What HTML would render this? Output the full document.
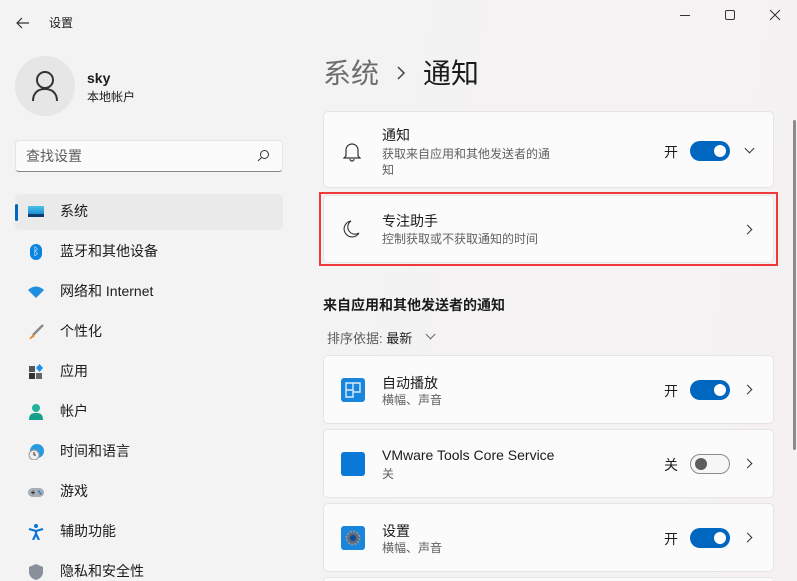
<!DOCTYPE html>
<html style="width:797px;height:581px;overflow:hidden"><head><meta charset="utf-8"><style>
*{margin:0;padding:0;box-sizing:border-box}
body{width:797px;height:581px;overflow:hidden;position:relative;font-family:"Liberation Sans","Noto Sans CJK SC",sans-serif;background:linear-gradient(100deg,#f3f3f3 0%,#f3f3f3 40%,#f5f1f2 100%);color:#1b1b1b;font-size:14px}
.a{position:absolute}
.nav{position:absolute;left:15px;width:268px;height:36px;display:flex;align-items:center}
.nav .ic{width:16px;height:16px;margin-left:13px;margin-right:16px;position:relative}
.nav span{font-size:14px;position:relative;top:-1px}
.card{position:absolute;left:323px;width:451px;background:#fbfbfb;border:1px solid #e6e5e5;border-radius:5px}
.t{position:absolute;left:58px;font-size:14px}
.s{position:absolute;left:58px;font-size:12px;color:#616161;line-height:16px}
.tog{position:absolute;width:40px;height:20px;border-radius:10px;background:#0067c0}
.tog::after{content:"";position:absolute;right:4px;top:4px;width:12px;height:12px;border-radius:50%;background:#fff}
.off{background:#f6f6f6;border:1px solid #8a8a8a}
.off::after{left:4px;right:auto;top:3px;background:#5d5d5d}
.chev{position:absolute;width:7px;height:7px;border-right:1.3px solid #333;border-top:1.3px solid #333;transform:rotate(45deg)}
.lab{position:absolute;font-size:14px}
</style></head><body>
<svg class="a" style="left:15px;top:15px" width="16" height="16"><path d="M14 8H2M7 3L2 8l5 5" stroke="#333" stroke-width="1.2" fill="none"/></svg>
<div class="a" style="left:49px;top:14px;font-size:12px">设置</div>
<div class="a" style="left:680px;top:15px;width:10px;border-top:1px solid #333"></div>
<div class="a" style="left:725px;top:10px;width:10px;height:10px;border:1px solid #333;border-radius:2px"></div>
<svg class="a" style="left:769px;top:9px" width="12" height="12"><path d="M1 1l10 10M11 1L1 11" stroke="#333" stroke-width="1"/></svg>
<div class="a" style="left:15px;top:56px;width:60px;height:60px;border-radius:50%;background:#e6e6e6"></div>
<svg class="a" style="left:30px;top:70px" width="30" height="32"><circle cx="15" cy="10" r="8" stroke="#333" stroke-width="2" fill="none"/><path d="M3 31c0-8 5-12 12-12s12 4 12 12" stroke="#333" stroke-width="2" fill="none"/></svg>
<div class="a" style="left:87px;top:70px;font-size:14px;font-weight:bold">sky</div>
<div class="a" style="left:87px;top:88px;font-size:12px">本地帐户</div>
<div class="a" style="left:15px;top:140px;width:268px;height:32px;background:#fbfbfb;border:1px solid #e5e5e5;border-bottom:1px solid #868686;border-radius:4px"></div>
<div class="a" style="left:26px;top:146px;font-size:14px;color:#5d5d5d">查找设置</div>
<svg class="a" style="left:257px;top:149px" width="13" height="13"><circle cx="7.5" cy="5.5" r="4" stroke="#333" fill="none"/><path d="M4.5 8.5L1 12" stroke="#333"/></svg>
<div class="a" style="left:15px;top:194px;width:268px;height:36px;background:#eaeaea;border-radius:5px"></div>
<div class="a" style="left:15px;top:204px;width:3px;height:17px;background:#0067c0;border-radius:2px"></div>
<div class="nav" style="top:194px"><div class="ic"><div class="a" style="left:0;top:2px;width:16px;height:11px;background:linear-gradient(#4cc2e9,#1a8fd1);border-bottom:3px solid #0d3b6e"></div></div><span>系统</span></div>
<div class="nav" style="top:234px"><div class="ic"><div class="a" style="left:2px;top:0;width:12px;height:16px;border-radius:6px;background:#0a84e0;color:#fff;font-size:11px;text-align:center;line-height:16px">ᛒ</div></div><span>蓝牙和其他设备</span></div>
<div class="nav" style="top:274px"><div class="ic"><svg width="16" height="16"><path d="M0 6Q8-1 16 6L8 14Z" fill="#1c8fe3"/></svg></div><span>网络和 Internet</span></div>
<div class="nav" style="top:314px"><div class="ic"><svg width="16" height="16"><path d="M15 1L5 11" stroke="#888" stroke-width="2.5"/><path d="M5 10l-4 5 2 0 4-3z" fill="#f08a2c"/></svg></div><span>个性化</span></div>
<div class="nav" style="top:354px"><div class="ic"><svg width="16" height="16"><rect x="1" y="2" width="6" height="6" fill="#555"/><rect x="1" y="9" width="6" height="6" fill="#333"/><rect x="8" y="9" width="6" height="6" fill="#666"/><path d="M11.5 0L15 4 11.5 8 8 4z" fill="#1a8fe3"/></svg></div><span>应用</span></div>
<div class="nav" style="top:394px"><div class="ic"><svg width="16" height="16"><circle cx="8" cy="4" r="4" fill="#1eb39a"/><path d="M1 16c0-6 3-7 7-7s7 1 7 7z" fill="#16a08c"/></svg></div><span>帐户</span></div>
<div class="nav" style="top:434px"><div class="ic"><svg width="16" height="16"><circle cx="9" cy="7" r="7" fill="#2a9ae0"/><circle cx="6" cy="11" r="5" fill="#eee" stroke="#999"/><path d="M6 8v3h2" stroke="#333" fill="none"/></svg></div><span>时间和语言</span></div>
<div class="nav" style="top:474px"><div class="ic"><svg width="16" height="16"><rect x="0" y="4" width="16" height="9" rx="4.5" fill="#a8aeb5"/><path d="M3 8.5h4M5 6.5v4" stroke="#333"/><circle cx="11" cy="7.5" r="1" fill="#1a6fd1"/><circle cx="12.5" cy="9.5" r="1" fill="#1a6fd1"/></svg></div><span>游戏</span></div>
<div class="nav" style="top:514px"><div class="ic"><svg width="16" height="16"><circle cx="8" cy="2" r="2" fill="#0a74d6"/><path d="M1 5l7 2 7-2M8 7v3l-3 6M8 10l3 6" stroke="#0a74d6" stroke-width="2.2" fill="none"/></svg></div><span>辅助功能</span></div>
<div class="nav" style="top:554px"><div class="ic"><svg width="16" height="16"><path d="M8 0L15 3v5c0 4-3 7-7 8C4 15 1 12 1 8V3z" fill="#8a9099"/></svg></div><span>隐私和安全性</span></div>

<div class="a" style="left:323px;top:52px;font-size:28px;color:#6d6d6d">系统</div>
<svg class="a" style="left:396px;top:66px" width="10" height="14"><path d="M2 1l6 6-6 6" stroke="#444" stroke-width="1.5" fill="none"/></svg>
<div class="a" style="left:423px;top:52px;font-size:28px;color:#1b1b1b">通知</div>
<div class="a" style="left:793px;top:120px;width:3px;height:330px;background:#8a8a8a;border-radius:2px"></div>

<div class="card" style="top:111px;height:77px">
<svg class="a" style="left:19px;top:29px" width="18" height="22"><path d="M3 15V9a6 6 0 0112 0v6l2 2H1z" stroke="#333" stroke-width="1.2" fill="none"/><path d="M7 18a2 2 0 004 0" stroke="#333" stroke-width="1.2" fill="none"/></svg>
<div class="t" style="top:13px">通知</div>
<div class="s" style="top:34px;width:172px">获取来自应用和其他发送者的通知</div>
<div class="lab" style="left:340px;top:30px">开</div>
<div class="tog" style="left:366px;top:29px"></div>
<div class="chev" style="left:422px;top:33px;transform:rotate(135deg)"></div>
</div>
<div class="card" style="top:195px;height:68px">
<svg class="a" style="left:19px;top:24px" width="18" height="20"><path d="M8 1a8 8 0 108 12A7 7 0 018 1z" stroke="#333" stroke-width="1.1" fill="none"/></svg>
<div class="t" style="top:15px">专注助手</div>
<div class="s" style="top:35px">控制获取或不获取通知的时间</div>
<div class="chev" style="left:420px;top:30px"></div>
</div>
<div class="a" style="left:319px;top:192px;width:459px;height:74px;border:2px solid #f03a3a"></div>

<div class="a" style="left:323px;top:295px;font-size:14px;font-weight:bold">来自应用和其他发送者的通知</div>
<div class="a" style="left:327px;top:328px;font-size:13px;color:#5d5d5d">排序依据: <b style="color:#1b1b1b;font-weight:normal">最新</b></div>
<div class="chev" style="left:427px;top:331px;transform:rotate(135deg);border-color:#666"></div>

<div class="card" style="top:355px;height:69px">
<svg class="a" style="left:17px;top:22px" width="24" height="24"><rect width="24" height="24" rx="3" fill="#1a85dc"/><path d="M5 5h14v9h-7v5H5zM12 5v9M5 12h7" stroke="#d8ecff" stroke-width="1.4" fill="none"/></svg>
<div class="t" style="top:17px">自动播放</div>
<div class="s" style="top:36px">横幅、声音</div>
<div class="lab" style="left:340px;top:25px">开</div>
<div class="tog" style="left:366px;top:24px"></div>
<div class="chev" style="left:420px;top:30px"></div>
</div>
<div class="card" style="top:429px;height:69px">
<div class="a" style="left:17px;top:22px;width:24px;height:24px;border-radius:3px;background:#0a78d6"></div>
<div class="t" style="top:17px">VMware Tools Core Service</div>
<div class="s" style="top:36px">关</div>
<div class="lab" style="left:340px;top:25px">关</div>
<div class="tog off" style="left:366px;top:24px"></div>
<div class="chev" style="left:420px;top:30px"></div>
</div>
<div class="card" style="top:503px;height:69px">
<svg class="a" style="left:17px;top:22px" width="24" height="24"><rect width="24" height="24" rx="3" fill="#1a85dc"/><circle cx="12" cy="12" r="6.5" fill="#5f6b7a" stroke="#8896a6" stroke-width="2" stroke-dasharray="2 1.4"/><circle cx="12" cy="12" r="3" fill="#0b4c9c"/></svg>
<div class="t" style="top:17px">设置</div>
<div class="s" style="top:36px">横幅、声音</div>
<div class="lab" style="left:340px;top:25px">开</div>
<div class="tog" style="left:366px;top:24px"></div>
<div class="chev" style="left:420px;top:30px"></div>
</div>
<div class="card" style="top:577px;height:4px;border-bottom:none;border-radius:5px 5px 0 0"></div>
</body></html>
